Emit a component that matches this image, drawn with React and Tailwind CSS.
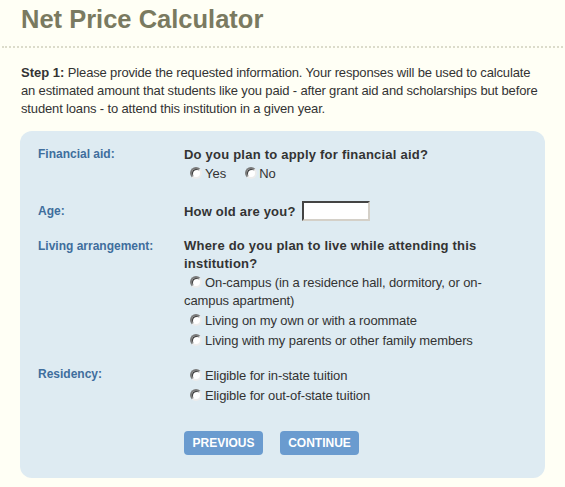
import React from "react";

function Radio({ className = "" }) {
  return (
    <span
      className={
        "inline-block w-[12px] h-[12px] rounded-full bg-white border-2 border-t-[#7a7a7a] border-l-[#7a7a7a] border-b-[#ececec] border-r-[#ececec] align-[-1px] shadow-[inset_1px_1px_0_#3a3a3a] " +
        className
      }
    />
  );
}

function Label({ children }) {
  return (
    <div className="w-[146px] shrink-0 text-[12px] leading-[17px] font-bold text-[#3f6e9d]">
      {children}
    </div>
  );
}

function Option({ children, first }) {
  return (
    <div
      className={
        "text-[13px] leading-[18px] tracking-[-0.1px] text-[#333] " + (first ? "mt-[1px]" : "mt-[2px]")
      }
    >
      <Radio className="ml-[6px] mr-[3px]" />
      {children}
    </div>
  );
}

export default function App() {
  return (
    <div className="min-h-[487px] w-full bg-[#fffff5] font-['Liberation_Sans',Arial,sans-serif] text-[#333]">
      <h1 className="pt-[5px] pl-[21px] text-[25.5px] leading-[29px] font-bold text-[#7a7a60]">
        Net Price Calculator
      </h1>
      <div className="mt-[12px] mx-[2px] border-t-2 border-dotted border-[#dcdccb]" />
      <p className="mt-[16px] ml-[21px] w-[524px] text-[13px] leading-[18px] tracking-[-0.15px] text-[#333]">
        <span className="font-bold tracking-normal">Step 1:</span> Please provide the requested
        information. Your responses will be used to calculate an estimated amount that students like
        you paid - after grant aid and scholarships but before student loans - to attend this
        institution in a given year.
      </p>

      <div className="mt-[13px] ml-[20px] w-[525px] rounded-[12px] bg-[#deebf2] pt-[15px] pb-[23px] pl-[18px]">
        {/* Financial aid */}
        <div className="flex">
          <Label>Financial aid:</Label>
          <div className="w-[310px]">
            <div className="text-[13px] leading-[18px] font-bold tracking-[0.22px]">
              Do you plan to apply for financial aid?
            </div>
            <div className="mt-[1px] text-[13px] leading-[18px]">
              <Radio className="ml-[6px] mr-[3px]" />
              Yes
              <Radio className="ml-[19px] mr-[2px]" />
              No
            </div>
          </div>
        </div>

        {/* Age */}
        <div className="flex items-center mt-[18px] h-[20px]">
          <div className="w-[146px] shrink-0 text-[12px] leading-[17px] font-bold text-[#3f6e9d]">
            Age:
          </div>
          <div className="flex items-center">
            <span className="text-[13px] leading-[17px] font-bold tracking-[0.2px]">
              How old are you?
            </span>
            <span className="ml-[6px] inline-block w-[68px] h-[20px] bg-white border-2 border-t-[#444] border-l-[#444] border-b-[#d4d0c8] border-r-[#d4d0c8]" />
          </div>
        </div>

        {/* Living arrangement */}
        <div className="flex mt-[16px]">
          <div className="w-[146px] shrink-0 text-[12px] leading-[18px] font-bold text-[#3f6e9d]">
            Living arrangement:
          </div>
          <div className="w-[310px]">
            <div className="text-[13px] leading-[18px] font-bold tracking-[0.22px]">
              Where do you plan to live while attending this institution?
            </div>
            <Option first>On-campus (in a residence hall, dormitory, or on-campus apartment)</Option>
            <Option>Living on my own or with a roommate</Option>
            <Option>Living with my parents or other family members</Option>
          </div>
        </div>

        {/* Residency */}
        <div className="flex mt-[16px]">
          <Label>Residency:</Label>
          <div className="w-[310px]">
            <Option first>Eligible for in-state tuition</Option>
            <Option>Eligible for out-of-state tuition</Option>
          </div>
        </div>

        {/* Buttons */}
        <div className="flex mt-[26px] pl-[146px] gap-[17px]">
          <button className="w-[79px] h-[24px] rounded-[4px] bg-[#6a9bcf] text-white text-[12px] font-bold leading-[24px]">
            PREVIOUS
          </button>
          <button className="w-[79px] h-[24px] rounded-[4px] bg-[#6a9bcf] text-white text-[12px] font-bold leading-[24px]">
            CONTINUE
          </button>
        </div>
      </div>
    </div>
  );
}
